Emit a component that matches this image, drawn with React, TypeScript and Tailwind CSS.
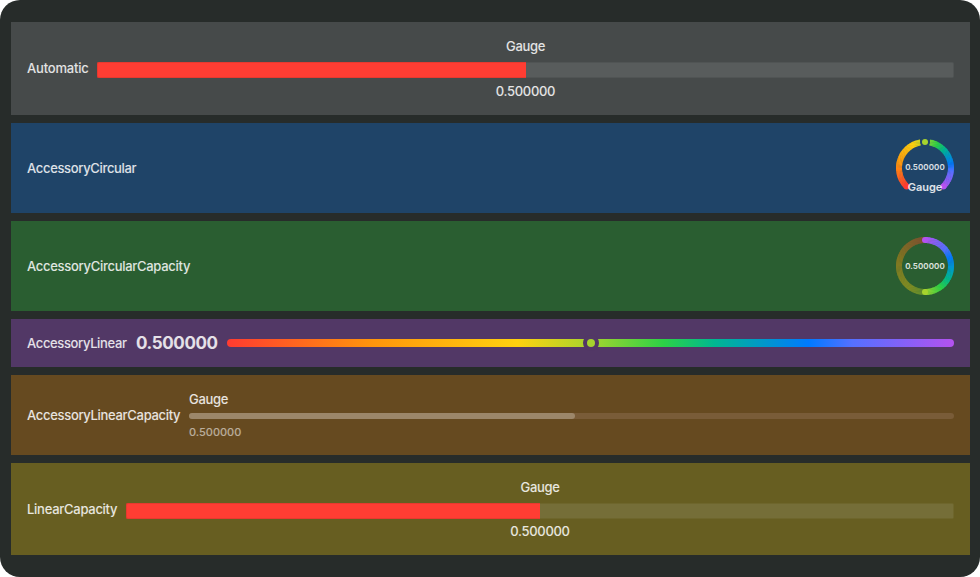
import type { ReactNode } from "react";

const STOPS: [number, number[]][] = [
  [0, [255, 59, 48]],
  [0.2, [255, 149, 12]],
  [0.4, [255, 210, 15]],
  [0.5, [166, 212, 46]],
  [0.6, [45, 210, 70]],
  [0.67, [0, 183, 145]],
  [0.8, [0, 122, 255]],
  [0.86, [85, 112, 255]],
  [1, [180, 82, 240]],
];

function spectrum(t: number): string {
  const p = Math.min(Math.max(t, 0), 1);
  let i = 0;
  while (i < STOPS.length - 2 && p > STOPS[i + 1][0]) i++;
  const [p0, c0] = STOPS[i];
  const [p1, c1] = STOPS[i + 1];
  const c = c0.map((v, k) => Math.round(v + ((c1[k] - v) * (p - p0)) / (p1 - p0)));
  return `rgb(${c.join(",")})`;
}

// Angles are clockwise degrees, with zero at the top of the ring.
function point(deg: number, r = 26) {
  const a = (deg * Math.PI) / 180;
  return { x: 29 + r * Math.sin(a), y: 29 - r * Math.cos(a) };
}

function Arc({ from, to, color, caps = false }: { from: number; to: number; color: (deg: number) => string; caps?: boolean }) {
  const step = 2;
  const parts: ReactNode[] = [];
  for (let d = from; d < to; d += step) {
    const a = point(d);
    const b = point(Math.min(d + step + 0.8, to));
    parts.push(
      <path key={d} d={`M${a.x} ${a.y}A26 26 0 0 1 ${b.x} ${b.y}`} stroke={color(d + step / 2)} strokeWidth="6" fill="none" />,
    );
  }
  const s = point(from);
  const e = point(to);
  return (
    <g>
      {caps && <circle cx={s.x} cy={s.y} r="3" fill={color(from)} />}
      {parts}
      {caps && <circle cx={e.x} cy={e.y} r="3" fill={color(to)} />}
    </g>
  );
}

function Row({ label, labelClass, className, children }: { label: string; labelClass: string; className: string; children: ReactNode }) {
  return (
    <section className={`flex items-center px-4 ${className}`}>
      <span className={`shrink-0 text-[13px] leading-4 font-[450] whitespace-nowrap ${labelClass}`}>{label}</span>
      {children}
    </section>
  );
}

function CapacityGauge({ track, barClass }: { track: string; barClass: string }) {
  return (
    <div className="flex flex-1 flex-col items-center text-[13px] leading-4 font-medium tracking-[-0.31px]">
      <span>Gauge</span>
      <div className={`mt-2 flex h-4 w-full ${barClass}`}>
        <div className="h-4 w-1/2 rounded-l-[2px] border-y border-l border-[#e8392f] bg-[#ff3d33]" />
        <div className={`h-4 w-1/2 rounded-r-[2px] border-y border-r ${track}`} />
      </div>
      <span>0.500000</span>
    </div>
  );
}

export default function App() {
  return (
    <div className="h-[577px] w-[980px] bg-white">
      <main className="flex h-full flex-col gap-2 rounded-[20px] bg-[#272c2a] pt-[22px] pr-[10px] pl-[11px] font-['Inter',sans-serif] text-white/85">
        <Row label="Automatic" labelClass="w-[70px] pb-px tracking-[-0.2px]" className="h-[93px] bg-[#464a4a]">
          <CapacityGauge track="border-[#505454] bg-[#585c5c]" barClass="mb-[5px]" />
        </Row>

        <Row label="AccessoryCircular" labelClass="tracking-[-0.33px]" className="h-[90px] bg-[#1f4468]">
          <div className="relative ml-auto h-[58px] w-[58px]">
            <svg className="block h-[58px] w-[58px] overflow-visible" viewBox="0 0 58 58">
              <Arc from={-135} to={-10} color={(d) => spectrum((d + 135) / 270)} />
              <Arc from={10} to={135} color={(d) => spectrum((d + 135) / 270)} />
              <circle cx={point(-135).x} cy={point(-135).y} r="3" fill={spectrum(0)} />
              <circle cx={point(135).x} cy={point(135).y} r="3" fill={spectrum(1)} />
              <circle cx="29" cy="3" r="5" fill="#1f4468" />
              <circle cx="29" cy="3" r="3" fill={spectrum(0.5)} />
            </svg>
            <span className="absolute inset-x-0 top-[23px] text-center text-[8px] leading-[10px] font-semibold tracking-[0.1px]">0.500000</span>
            <span className="absolute inset-x-0 top-[41px] text-center text-[11px] leading-[14px] font-semibold">Gauge</span>
          </div>
        </Row>

        <Row label="AccessoryCircularCapacity" labelClass="tracking-[-0.29px]" className="h-[90px] bg-[#2a5e31]">
          <div className="relative ml-auto h-[58px] w-[58px]">
            <svg className="block h-[58px] w-[58px] overflow-visible" viewBox="0 0 58 58">
              <g opacity="0.4">
                <Arc from={180} to={360} color={(d) => spectrum(1 - d / 360)} />
              </g>
              <Arc from={0} to={180} color={(d) => spectrum(1 - d / 360)} caps />
            </svg>
            <span className="absolute inset-x-0 top-[24px] text-center text-[8px] leading-[10px] font-semibold tracking-[0.1px]">0.500000</span>
          </div>
        </Row>

        <Row label="AccessoryLinear" labelClass="w-[109px] tracking-[-0.36px]" className="h-12 bg-[#523866]">
          <span className="w-[91px] shrink-0 text-[17px] leading-5 font-bold tracking-[-0.38px]">0.500000</span>
          <div className="relative h-2 flex-1 rounded-full bg-[linear-gradient(to_right,#ff3b30,#ff950c_20%,#ffd20f_40%,#a6d42e_50%,#2dd246_60%,#00b791_67%,#007aff_80%,#5570ff_86%,#b452f0)]">
            <div className="absolute -top-1 left-1/2 h-4 w-4 -translate-x-1/2 rounded-full bg-[#523866]" />
            <div className="absolute top-0 left-1/2 h-2 w-2 -translate-x-1/2 rounded-full bg-[#a6d42e]" />
          </div>
        </Row>

        <Row label="AccessoryLinearCapacity" labelClass="w-[162px] tracking-[-0.31px]" className="h-20 bg-[#664a20]">
          <div className="flex flex-1 flex-col">
            <span className="text-[13px] leading-4 font-medium tracking-[-0.31px]">Gauge</span>
            <div className="mt-[6px] mb-[6px] h-[6px] rounded-full bg-[#795c38]">
              <div className="h-full w-[386px] rounded-full bg-[#9c876a]" />
            </div>
            <span className="text-[11px] leading-[14px] font-medium text-white/55">0.500000</span>
          </div>
        </Row>

        <Row label="LinearCapacity" labelClass="w-[99px] tracking-[-0.27px]" className="h-[92px] bg-[#675e21]">
          <CapacityGauge track="border-[#6e662c] bg-[#756e38]" barClass="mb-1" />
        </Row>
      </main>
    </div>
  );
}
